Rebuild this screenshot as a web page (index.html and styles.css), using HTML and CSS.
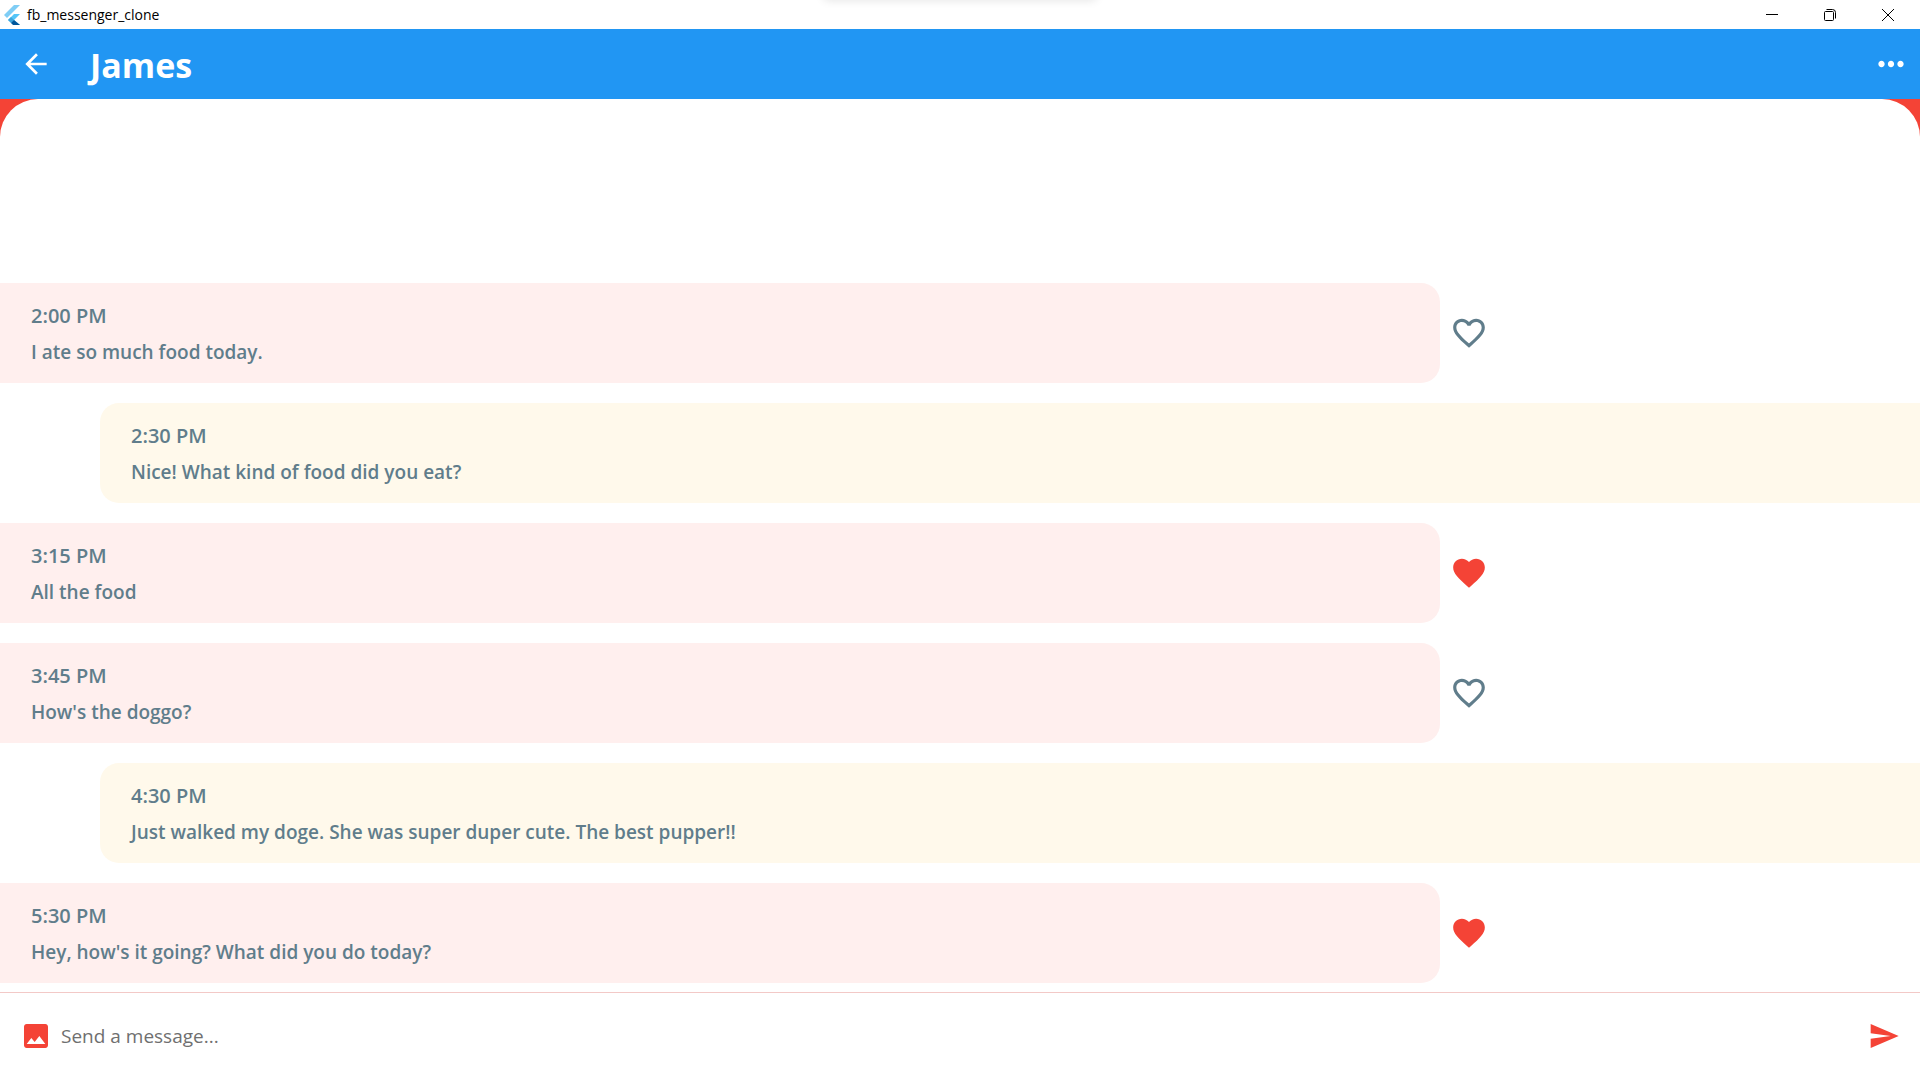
FILE: index.html
```html
<!DOCTYPE html>
<html lang="en">
<head>
<meta charset="utf-8">
<meta name="viewport" content="width=device-width, initial-scale=1">
<title>fb_messenger_clone</title>
<link rel="stylesheet" href="styles.css">
</head>
<body>
<svg class="sprite" aria-hidden="true">
  <symbol id="heart" viewBox="0 0 24 24"><path d="M12 21.35l-1.45-1.32C5.4 15.36 2 12.28 2 8.5 2 5.42 4.42 3 7.5 3c1.74 0 3.41.81 4.5 2.09C13.09 3.81 14.76 3 16.5 3 19.58 3 22 5.42 22 8.5c0 3.78-3.4 6.86-8.55 11.54L12 21.35z"/></symbol>
  <symbol id="heart-outline" viewBox="0 0 24 24"><path d="M16.5 3c-1.74 0-3.41.81-4.5 2.09C10.91 3.81 9.24 3 7.5 3 4.42 3 2 5.42 2 8.5c0 3.78 3.4 6.86 8.55 11.54L12 21.35l1.45-1.32C18.6 15.36 22 12.28 22 8.5 22 5.42 19.58 3 16.5 3zm-4.4 15.55l-.1.1-.1-.1C7.14 14.24 4 11.39 4 8.5 4 6.5 5.5 5 7.5 5c1.54 0 3.04.99 3.57 2.36h1.87C13.46 5.99 14.96 5 16.5 5c2 0 3.5 1.5 3.5 3.5 0 2.89-3.14 5.74-7.9 10.05z"/></symbol>
</svg>

<div class="titlebar">
  <span class="snap-hint"></span>
  <svg class="logo" viewBox="0 0 16 20" aria-hidden="true">
    <path d="M0 10L10 0h6L3 13z" fill="#7fcdf5"/>
    <path d="M10 9h6l-6 6 6 5H10l-6-5z" fill="#54c5f8"/>
    <path d="M4 15l3-3 3 3-3 3z" fill="#3da5dc"/>
    <path d="M7 18l3-3 6 5H9z" fill="#01579b"/>
  </svg>
  <span class="titlebar-name">fb_messenger_clone</span>
  <div class="window-controls">
    <button type="button" aria-label="Minimize"><svg viewBox="0 0 12 12"><path d="M0 5.5h12"/></svg></button>
    <button type="button" aria-label="Restore"><svg viewBox="0 0 12 12"><rect x=".5" y="2.5" width="9" height="9" rx="1"/><path d="M2.500 .5h6q3 0 3 3v6"/></svg></button>
    <button type="button" aria-label="Close"><svg viewBox="0 0 12 12"><path d="M0 0l12 12M12 0L0 12"/></svg></button>
  </div>
</div>

<header class="appbar">
  <button type="button" class="icon-button" aria-label="Back"><svg class="icon-s" viewBox="0 0 24 24"><path d="M20 11H7.830l5.590-5.590L12 4l-8 8 8 8 1.410-1.410L7.830 13H20v-2z"/></svg></button>
  <h1>James</h1>
  <button type="button" class="icon-button more" aria-label="More"><svg class="icon-l" viewBox="0 0 24 24"><path d="M6 10c-1.100 0-2 .9-2 2s.9 2 2 2 2-.9 2-2-.9-2-2-2zm12 0c-1.100 0-2 .9-2 2s.9 2 2 2 2-.9 2-2-.9-2-2-2zm-6 0c-1.100 0-2 .9-2 2s.9 2 2 2 2-.9 2-2-.9-2-2-2z"/></svg></button>
</header>

<div class="backdrop">
  <main class="thread">
    <div class="message received">
      <div class="bubble"><time>2:00 PM</time><p>I ate so much food today.</p></div>
      <button type="button" class="icon-button like" aria-label="Like"><svg class="icon-l"><use href="#heart-outline"/></svg></button>
    </div>
    <div class="message sent">
      <div class="bubble"><time>2:30 PM</time><p>Nice! What kind of food did you eat?</p></div>
    </div>
    <div class="message received">
      <div class="bubble"><time>3:15 PM</time><p>All the food</p></div>
      <button type="button" class="icon-button like liked" aria-label="Unlike"><svg class="icon-l"><use href="#heart"/></svg></button>
    </div>
    <div class="message received">
      <div class="bubble"><time>3:45 PM</time><p>How's the doggo?</p></div>
      <button type="button" class="icon-button like" aria-label="Like"><svg class="icon-l"><use href="#heart-outline"/></svg></button>
    </div>
    <div class="message sent">
      <div class="bubble"><time>4:30 PM</time><p>Just walked my doge. She was super duper cute. The best pupper!!</p></div>
    </div>
    <div class="message received">
      <div class="bubble"><time>5:30 PM</time><p>Hey, how's it going? What did you do today?</p></div>
      <button type="button" class="icon-button like liked" aria-label="Unlike"><svg class="icon-l"><use href="#heart"/></svg></button>
    </div>
  </main>
</div>

<form class="composer">
  <button type="button" class="icon-button" aria-label="Add photo"><svg class="icon-s" viewBox="0 0 24 24"><path d="M21 19V5c0-1.100-.9-2-2-2H5c-1.100 0-2 .9-2 2v14c0 1.100.9 2 2 2h14c1.100 0 2-.9 2-2zM8.500 13.500l2.500 3.010L14.500 12l4.500 6H5l3.500-4.500z"/></svg></button>
  <input type="text" placeholder="Send a message..." aria-label="Send a message">
  <button type="submit" class="icon-button" aria-label="Send"><svg class="icon-s" viewBox="0 0 24 24"><path d="M2.010 21L23 12 2.010 3 2 10l15 2-15 2z"/></svg></button>
</form>
</body>
</html>
```

FILE: styles.css
```css
* {
  box-sizing: border-box;
}

body {
  display: flex;
  flex-direction: column;
  min-height: 100vh;
  margin: 0;
  background: #fff;
  font-family: "Open Sans", "Noto Sans", sans-serif;
}

button {
  padding: 0;
  border: 0;
  background: none;
  color: inherit;
  cursor: pointer;
}

svg {
  display: block;
}

.sprite {
  position: absolute;
  width: 0;
  height: 0;
}

.titlebar {
  position: relative;
  display: flex;
  align-items: center;
  height: 29px;
  padding: 0 3px 0 4px;
  overflow: hidden;
  color: #000;
  font-size: 14px;
}

.snap-hint {
  position: absolute;
  bottom: 100%;
  left: 50%;
  width: 272px;
  height: 8px;
  margin-left: -136px;
  box-shadow: 0 0 10px rgba(0, 0, 0, 0.12);
}

.logo {
  width: 16px;
  height: 20px;
  margin-right: 7px;
}

.window-controls {
  display: flex;
  align-self: stretch;
  margin-left: auto;
}

.window-controls button {
  display: grid;
  place-items: center;
  width: 58px;
}

.window-controls svg {
  width: 12px;
  height: 12px;
  fill: none;
  stroke: #000;
}

.appbar {
  display: flex;
  align-items: center;
  height: 70px;
  padding: 0 10px 0 20px;
  background: #2196f3;
  color: #fff;
}

.appbar h1 {
  margin: 0 0 0 38px;
  padding-top: 2px;
  font-size: 34px;
  font-weight: 700;
  line-height: 40px;
}

.appbar .more {
  margin-left: auto;
}

.icon-button svg {
  fill: currentColor;
}

.icon-s {
  width: 32px;
  height: 32px;
}

.icon-l {
  width: 38px;
  height: 38px;
}

.backdrop {
  display: flex;
  flex: 1;
  background: #f44336;
}

.thread {
  display: flex;
  flex: 1;
  flex-direction: column;
  justify-content: flex-end;
  gap: 20px;
  padding: 20px 0 9px;
  border-radius: 38px 38px 0 0;
  background: #fff;
}

.message {
  display: flex;
  align-items: center;
  gap: 10px;
  color: #607d8b;
}

.bubble {
  padding: 18px 31px;
  font-size: 19px;
  font-weight: 600;
}

.received .bubble {
  width: 75%;
  border-radius: 0 19px 19px 0;
  background: #ffefee;
}

.sent .bubble {
  flex: 1;
  margin-left: 100px;
  border-radius: 19px 0 0 19px;
  background: #fff9eb;
}

.bubble time {
  display: block;
  font-size: 20px;
  line-height: 30px;
}

.bubble p {
  margin: 8px 0 0;
  line-height: 26px;
}

.liked {
  color: #f44336;
}

.composer {
  display: flex;
  align-items: center;
  gap: 9px;
  height: 85px;
  padding: 2px 20px 0;
  border-top: 1px solid #f3c9c7;
  color: #f44336;
}

.composer input {
  flex: 1;
  min-width: 0;
  padding: 0;
  border: 0;
  outline: 0;
  background: none;
  color: #333;
  font: 400 19px/28px "Open Sans", "Noto Sans", sans-serif;
}

.composer input::placeholder {
  color: #6f6f6f;
  opacity: 1;
}
```
